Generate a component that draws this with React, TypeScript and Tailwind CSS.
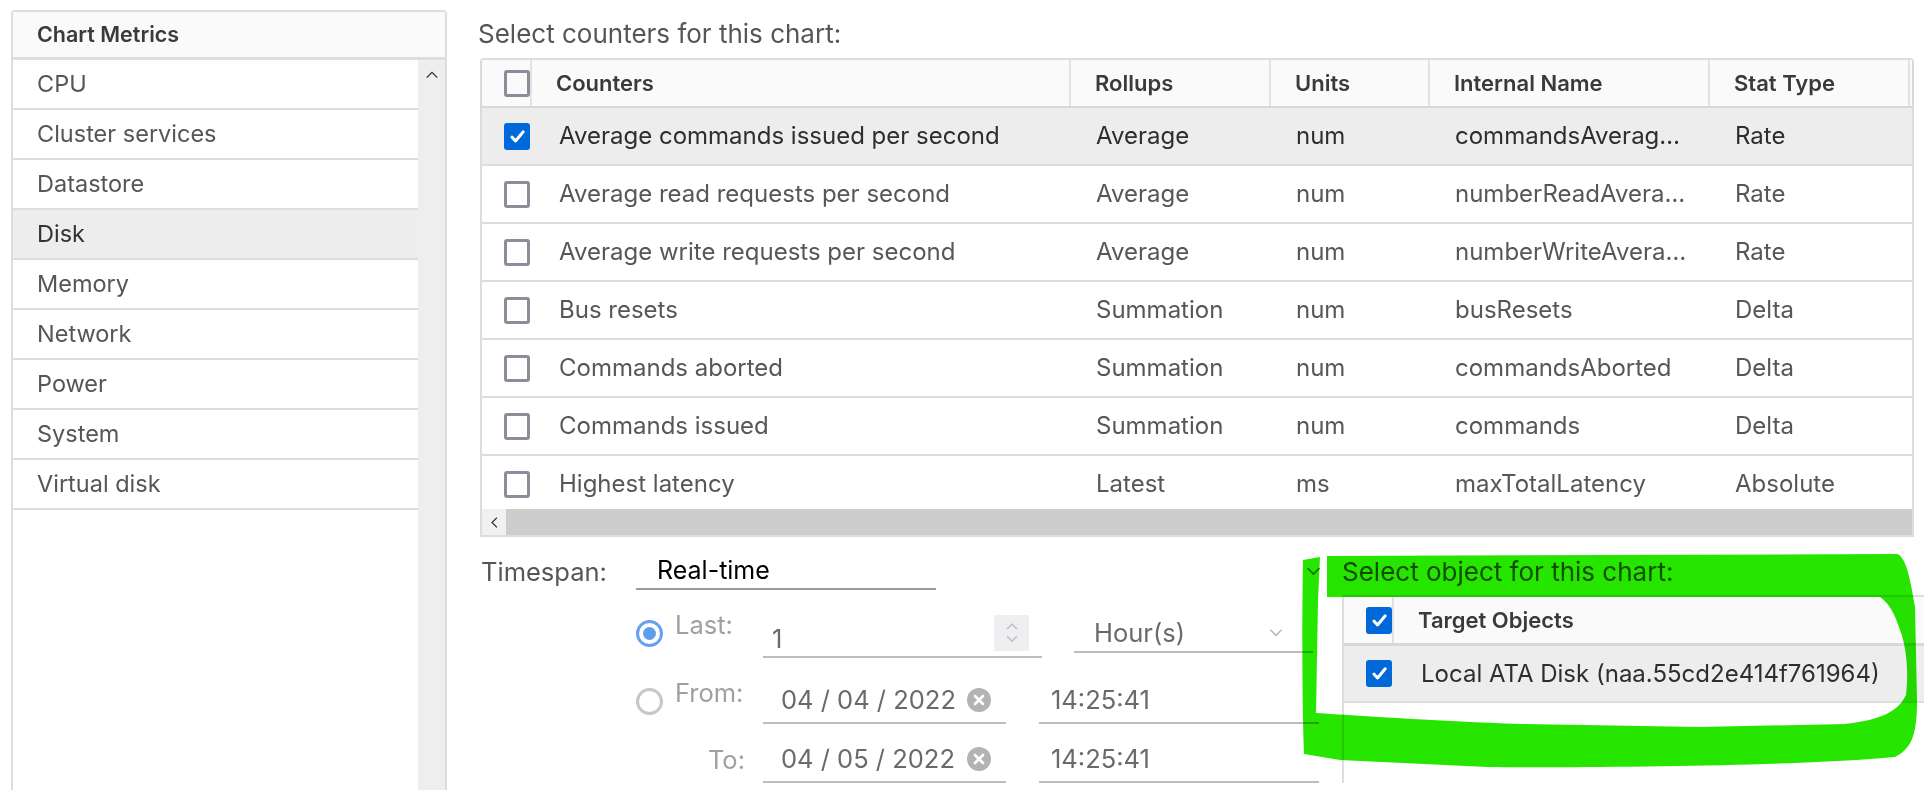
import React from 'react';

const metrics = ['CPU', 'Cluster services', 'Datastore', 'Disk', 'Memory', 'Network', 'Power', 'System', 'Virtual disk'];

const counters = [
  ['Average commands issued per second', 'Average', 'num', 'commandsAverag…', 'Rate'],
  ['Average read requests per second', 'Average', 'num', 'numberReadAvera…', 'Rate'],
  ['Average write requests per second', 'Average', 'num', 'numberWriteAvera…', 'Rate'],
  ['Bus resets', 'Summation', 'num', 'busResets', 'Delta'],
  ['Commands aborted', 'Summation', 'num', 'commandsAborted', 'Delta'],
  ['Commands issued', 'Summation', 'num', 'commands', 'Delta'],
  ['Highest latency', 'Latest', 'ms', 'maxTotalLatency', 'Absolute'],
];

// widths of the counter table columns, borders included
const cols = 'grid grid-cols-[50px_539px_200px_159px_280px_200px]';

function Check({ on }: { on?: boolean }) {
  if (on) {
    return (
      <span className="flex h-[27px] w-[26px] items-center justify-center rounded-[3px] bg-[#0068d8]">
        <svg viewBox="0 0 16 16" className="h-[17px] w-[17px]">
          <path d="M2.8 8.6l3.4 3.6L13.4 3.6" fill="none" stroke="#fff" strokeWidth="2.8" strokeLinecap="round" strokeLinejoin="round" />
        </svg>
      </span>
    );
  }
  return <span className="block h-[27px] w-[26px] rounded-[3px] border-[3px] border-[#8d8c99]" />;
}

function Chevron({ className, dir = 'down' }: { className?: string; dir?: 'down' | 'up' | 'left' }) {
  const d = dir === 'down' ? 'M2 4l6 6 6-6' : dir === 'up' ? 'M2 11l6-6 6 6' : 'M11 2L5 8l6 6';
  return (
    <svg viewBox="0 0 16 16" className={className}>
      <path d={d} fill="none" stroke="currentColor" strokeWidth="1.6" />
    </svg>
  );
}

function ClearIcon() {
  return (
    <svg viewBox="0 0 24 24" className="h-[24px] w-[24px]">
      <circle cx="12" cy="12" r="12" fill="#b3b3b3" />
      <path d="M8 8l8 8M16 8l-8 8" stroke="#fff" strokeWidth="2.6" strokeLinecap="round" />
    </svg>
  );
}

function LeftPanel() {
  return (
    <div className="ml-[11px] mt-[10px] flex h-[800px] w-[436px] flex-col rounded-t-[4px] border-2 border-[#dddddd]">
      <div className="flex h-[48px] items-center border-b-[3px] border-[#dddddd] bg-[#fafafa] pl-[24px] text-[21.5px] font-semibold text-[#3a3a3a]">
        Chart Metrics
      </div>
      <div className="flex flex-1">
        <div className="w-[405px]">
          {metrics.map((m) => (
            <div
              key={m}
              className={`flex h-[50px] items-center border-b-2 border-[#dddddd] pl-[24px] text-[23.5px] ${
                m === 'Disk' ? 'bg-[#ededed] text-[#333333]' : 'text-[#565656]'
              }`}
            >
              {m}
            </div>
          ))}
        </div>
        <div className="flex flex-1 justify-center bg-[#eeeeee] pt-[8px]">
          <Chevron dir="up" className="h-[14px] w-[14px] text-[#333333]" />
        </div>
      </div>
    </div>
  );
}

function CounterTable() {
  return (
    <div className="ml-[2px] mt-[10px] w-[1434px] rounded-t-[4px] border-2 border-[#dddddd]">
      <div className={`${cols} h-[48px] border-b-2 border-[#d8d8d8] bg-[#fafafa] text-[22px] font-semibold text-[#3a3a3a] shadow-[0_2px_2px_rgba(0,0,0,0.08)]`}>
        <div className="flex items-center border-r-2 border-[#e2e2e2] pl-[22px]">
          <Check />
        </div>
        {['Counters', 'Rollups', 'Units', 'Internal Name', 'Stat Type'].map((h) => (
          <div key={h} className="flex items-center border-r-2 border-[#e2e2e2] pl-[24px]">
            {h}
          </div>
        ))}
      </div>
      <div className="h-[401px] overflow-hidden">
        {counters.map((r, i) => (
          <div
            key={r[0]}
            className={`${cols} h-[58px] border-b-2 border-[#dddddd] text-[24px] ${
              i === 0 ? 'bg-[#ededed] text-[#2e2e2e]' : 'text-[#575757]'
            }`}
          >
            <div className="flex items-center pl-[22px]">
              <Check on={i === 0} />
            </div>
            <div className="flex items-center pl-[27px]">{r[0]}</div>
            <div className="flex items-center pl-[25px]">{r[1]}</div>
            <div className="flex items-center pl-[25px]">{r[2]}</div>
            <div className="flex items-center overflow-hidden whitespace-nowrap pl-[25px]">{r[3]}</div>
            <div className="flex items-center pl-[25px]">{r[4]}</div>
          </div>
        ))}
      </div>
      <div className="flex h-[26px]">
        <div className="flex w-[24px] items-center justify-center bg-[#f1f1f1]">
          <Chevron dir="left" className="h-[13px] w-[13px] text-[#333333]" />
        </div>
        <div className="flex-1 bg-[#cdcdcd]" />
      </div>
    </div>
  );
}

function Radio({ on }: { on?: boolean }) {
  return on ? (
    <span className="flex h-[27px] w-[27px] items-center justify-center rounded-full border-[3px] border-[#66a3ec]">
      <span className="h-[13px] w-[13px] rounded-full bg-[#5f9eec]" />
    </span>
  ) : (
    <span className="block h-[27px] w-[27px] rounded-full border-[3px] border-[#c6c6cc]" />
  );
}

function TimeRows() {
  return (
    <div className="w-[864px] text-[25.5px]">
      <div className="mt-[17px] flex h-[36px] items-center">
        <div className="w-[158px] pl-[3px] text-[#565656]">Timespan:</div>
        <div className="flex h-[36px] w-[300px] items-center border-b-2 border-[#9a9a9a] pl-[21px] text-[25px] text-black">Real-time</div>
        <Chevron className="ml-auto mr-[20px] h-[16px] w-[17px] text-[#777777]" />
      </div>

      <div className="mt-[22px] flex h-[46px] items-start">
        <div className="ml-[158px] mt-[8px]">
          <Radio on />
        </div>
        <div className="ml-[12px] w-[88px] leading-[26px] text-[#a0a0a0]">Last:</div>
        <div className="flex h-[46px] w-[279px] items-start border-b-2 border-[#bdbdbd]">
          <span className="pl-[9px] pt-[8px] text-[#6a6a6a]">1</span>
          <span className="ml-auto mr-[13px] mt-[3px] flex h-[36px] w-[35px] flex-col items-center justify-center bg-[#efeff2] text-[#b8b8bf]">
            <Chevron dir="up" className="h-[13px] w-[14px]" />
            <Chevron className="h-[13px] w-[14px]" />
          </span>
        </div>
        <div className="ml-[32px] flex h-[41px] w-[239px] items-center border-b-2 border-[#bdbdbd] pl-[20px] pr-[29px] pt-[4px] text-[#6a6a6a]">
          Hour(s)
          <Chevron className="ml-auto h-[15px] w-[16px] text-[#b8b8bf]" />
        </div>
      </div>

      <div className="mt-[20px] flex h-[46px] items-start">
        <div className="ml-[158px] mt-[10px]">
          <Radio />
        </div>
        <div className="ml-[12px] mt-[2px] w-[88px] leading-[26px] text-[#a0a0a0]">From:</div>
        <div className="flex h-[46px] w-[243px] items-center border-b-2 border-[#bdbdbd] pl-[18px] pr-[15px] text-[#6a6a6a]">
          04 / 04 / 2022
          <span className="ml-auto">
            <ClearIcon />
          </span>
        </div>
        <div className="ml-[33px] flex h-[46px] w-[280px] items-center border-b-2 border-[#bdbdbd] pl-[12px] text-[#6a6a6a]">14:25:41</div>
      </div>

      <div className="mt-[13px] flex h-[46px] items-start">
        <div className="ml-[158px] mt-[10px] w-[127px] pr-[18px] text-right leading-[26px] text-[#a0a0a0]">To:</div>
        <div className="flex h-[46px] w-[243px] items-center border-b-2 border-[#bdbdbd] pl-[18px] pr-[15px] text-[#6a6a6a]">
          04 / 05 / 2022
          <span className="ml-auto">
            <ClearIcon />
          </span>
        </div>
        <div className="ml-[33px] flex h-[46px] w-[280px] items-center border-b-2 border-[#bdbdbd] pl-[12px] text-[#6a6a6a]">14:25:41</div>
      </div>
    </div>
  );
}

function ObjectTable() {
  return (
    <div className="flex flex-1 flex-col">
      <div className="mt-[21px] text-[26px] leading-[28px] text-[#565656]">Select object for this chart:</div>
      <div className="mt-[9px] flex-1 border-l-2 border-t-2 border-[#dddddd]">
        <div className="flex h-[49px] border-b-[3px] border-[#d8d8d8] bg-[#fafafa] text-[22px] font-semibold text-[#3a3a3a]">
          <div className="flex w-[50px] items-center border-r-2 border-[#e2e2e2] pl-[22px]">
            <Check on />
          </div>
          <div className="flex items-center pl-[24px]">Target Objects</div>
        </div>
        <div className="flex h-[57px] border-b-2 border-[#dddddd] bg-[#ededed] text-[24px] text-[#2e2e2e]">
          <div className="flex w-[50px] items-center pl-[22px]">
            <Check on />
          </div>
          <div className="flex items-center pl-[27px]">Local ATA Disk (naa.55cd2e414f761964)</div>
        </div>
      </div>
    </div>
  );
}

// freehand highlighter mark drawn over the object picker
function Annotation() {
  return (
    <svg viewBox="0 0 1924 790" className="pointer-events-none absolute left-0 top-0 h-[790px] w-[1924px] mix-blend-multiply">
      <path
        fill="#26e600"
        d="M1303 560 L1320 557 L1318 600 L1316 713 C1360 716 1440 721 1520 724 L1700 727 L1845 724 C1880 720 1898 712 1906 695 C1909 670 1906 645 1900 630 C1895 615 1890 604 1880 597 L1327 597 L1327 556 L1897 554 C1905 556 1910 575 1915 607 L1917 700 C1917 735 1912 748 1895 757 C1800 766 1600 768 1487 767 L1340 760 L1304 754 C1302 700 1302 620 1303 560 Z"
      />
    </svg>
  );
}

export default function App() {
  return (
    <div className="relative h-[790px] w-[1924px] overflow-hidden bg-white font-['Inter',sans-serif]">
      <div className="flex">
        <LeftPanel />
        <div className="ml-[31px] w-[1446px]">
          <div className="pt-[20px] text-[26px] leading-[28px] text-[#565656]">Select counters for this chart:</div>
          <CounterTable />
          <div className="flex">
            <TimeRows />
            <ObjectTable />
          </div>
        </div>
      </div>
      <Annotation />
    </div>
  );
}
